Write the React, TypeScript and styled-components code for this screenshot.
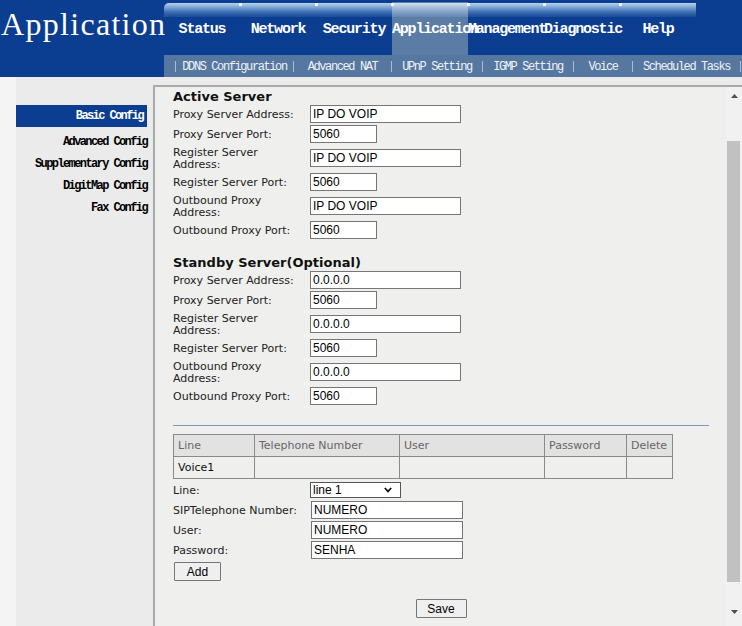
import React from 'react';
import styled, { createGlobalStyle } from 'styled-components';

const GlobalStyle = createGlobalStyle`
  html, body {
    margin: 0;
    padding: 0;
  }
  body {
    width: 742px;
    height: 626px;
    overflow: hidden;
    background: #f4f4f4;
  }
`;

const Header = styled.div`
  display: flex;
  height: 77px;
  background: #0b3d91;
`;

const Logo = styled.div`
  width: 164px;
  flex: none;
  padding: 4px 0 0 1px;
  box-sizing: border-box;
  font-family: 'Liberation Serif', serif;
  font-size: 32px;
  letter-spacing: 1.3px;
  line-height: 40px;
  color: #fff;
  white-space: nowrap;
`;

const NavArea = styled.div`
  flex: 1;
  display: flex;
  flex-direction: column;
  min-width: 0;
`;

const Tabs = styled.div`
  display: flex;
  height: 55px;
`;

const Tab = styled.div<{ $active?: boolean }>`
  width: 76px;
  flex: none;
  padding-top: 3px;
  box-sizing: border-box;
  background: ${(p) =>
    p.$active ? 'linear-gradient(to bottom, transparent 2px, #5b7da5 2px)' : 'transparent'};
`;

const TabStrip = styled.div<{ $first?: boolean; $active?: boolean }>`
  position: relative;
  height: 14px;
  border-top-left-radius: ${(p) => (p.$first ? '5px' : '0')};
  background: ${(p) =>
    p.$active
      ? 'linear-gradient(to bottom, #d2e0ee 0%, #a9c2dc 30%, #7c9dc2 70%, #6489b3 100%)'
      : 'linear-gradient(to bottom, #b9d1ec 0%, #7fa7d6 30%, #3566ad 70%, #1c4d99 100%)'};

  &::before {
    content: '';
    position: absolute;
    left: -1px;
    top: 0;
    width: 3px;
    height: 3px;
    background: ${(p) => (p.$first ? 'transparent' : '#ffffff')};
    opacity: 0.85;
  }
`;

const TabLabel = styled.div`
  display: flex;
  justify-content: safe center;
  margin-top: 3px;
  height: 20px;
  line-height: 20px;
  font-family: 'Liberation Mono', monospace;
  font-weight: bold;
  font-size: 15px;
  letter-spacing: -1.2px;
  color: #fff;
  white-space: nowrap;
`;

const SubNav = styled.div`
  display: flex;
  align-items: center;
  height: 22px;
  padding-left: 11px;
  background: #56779f;
  overflow: hidden;
`;

const SubItem = styled.div<{ $w: number }>`
  display: flex;
  align-items: center;
  width: ${(p) => p.$w}px;
  flex: none;
`;

const Sep = styled.span`
  width: 1px;
  height: 11px;
  flex: none;
  background: #a9bcd2;
`;

const SubLabel = styled.span`
  flex: 1;
  text-align: center;
  padding-top: 1px;
  font-family: 'Liberation Mono', monospace;
  font-size: 12px;
  letter-spacing: -1.4px;
  color: #eef3f8;
  white-space: nowrap;
`;

const Body = styled.div`
  display: flex;
  height: 549px;
`;

const Gutter = styled.div`
  width: 16px;
  flex: none;
  background: #f4f4f4;
`;

const Sidebar = styled.div`
  width: 137px;
  flex: none;
  padding-top: 28px;
  box-sizing: border-box;
  background: #ebebeb;
`;

const SideItem = styled.div<{ $active?: boolean }>`
  height: 22px;
  line-height: 22px;
  margin: 0 6px ${(p) => (p.$active ? '4px' : '0')} 0;
  padding-right: ${(p) => (p.$active ? '4px' : '0')};
  text-align: right;
  font-family: 'Liberation Mono', monospace;
  font-weight: bold;
  font-size: 12px;
  letter-spacing: -1.6px;
  white-space: nowrap;
  color: ${(p) => (p.$active ? '#fff' : '#000')};
  background: ${(p) => (p.$active ? '#0b3d91' : 'transparent')};
`;

const Main = styled.div`
  flex: 1;
  padding-top: 8px;
  background: #ebebeb;
  min-width: 0;
`;

const Panel = styled.div`
  display: flex;
  height: 541px;
  box-sizing: border-box;
  border-top: 2px solid #a9a9a9;
  border-left: 2px solid #a9a9a9;
  background: #eff0ee;
  overflow: hidden;
`;

const Content = styled.div`
  flex: 1;
  min-width: 0;
  padding: 2px 18px 0 18px;
  font-family: 'DejaVu Sans', Verdana, sans-serif;
  font-size: 11px;
  color: #222;
`;

const Heading = styled.div<{ $gap?: number }>`
  margin-top: ${(p) => p.$gap ?? 0}px;
  font-family: 'DejaVu Sans', Verdana, sans-serif;
  font-weight: bold;
  font-size: 13px;
  line-height: 15px;
  color: #111;
`;

const Row = styled.div<{ $tall?: boolean; $col?: number }>`
  display: grid;
  grid-template-columns: ${(p) => p.$col ?? 137}px 1fr;
  align-items: center;
  height: ${(p) => (p.$tall ? 28 : 20)}px;
`;

const Label = styled.div`
  line-height: 12px;
  max-width: 130px;
  padding-top: 1px;
`;

const TextInput = styled.input<{ $w: number }>`
  display: block;
  width: ${(p) => p.$w}px;
  height: 18px;
  box-sizing: border-box;
  margin: 0;
  padding: 0 2px;
  border: 1px solid #767676;
  border-radius: 0;
  background: #fff;
  font-family: 'Liberation Sans', Arial, sans-serif;
  font-size: 12px;
  color: #000;
  outline: none;
`;

const SelectBox = styled.div`
  display: flex;
  align-items: center;
  width: 91px;
  height: 16px;
  box-sizing: border-box;
  border: 1px solid #555;
  background: #fff;
`;

const Select = styled.select`
  flex: 1;
  min-width: 0;
  height: 14px;
  margin: 0;
  padding: 0 0 0 2px;
  border: none;
  background: transparent;
  appearance: none;
  font-family: 'Liberation Sans', Arial, sans-serif;
  font-size: 12px;
  line-height: 14px;
  color: #000;
  outline: none;
`;

const Chevron = styled.svg`
  width: 8px;
  height: 6px;
  margin-right: 8px;
  flex: none;
`;

const Divider = styled.div`
  margin-top: 19px;
  height: 1px;
  background: #7d99b6;
`;

const Table = styled.table`
  margin: 8px 0 1px;
  border-collapse: collapse;
  width: 499px;
  table-layout: fixed;
`;

const Th = styled.th<{ $w: number }>`
  width: ${(p) => p.$w - 9}px;
  height: 21px;
  padding: 0 4px;
  border: 1px solid #8a8a8a;
  background: #e2e2e2;
  text-align: left;
  font-weight: normal;
  font-size: 11px;
  color: #666;
`;

const Td = styled.td`
  height: 21px;
  padding: 0 4px;
  border: 1px solid #8a8a8a;
  font-size: 11px;
  color: #111;
`;

const Button = styled.button<{ $w: number }>`
  width: ${(p) => p.$w}px;
  height: 19px;
  margin: 0;
  padding: 0;
  box-sizing: border-box;
  border: 1px solid #767676;
  border-radius: 1px;
  background: #efefef;
  font-family: 'Liberation Sans', Arial, sans-serif;
  font-size: 12px;
  color: #000;
`;

const AddRow = styled.div`
  margin: 2px 0 0 1px;
`;

const SaveRow = styled.div`
  display: flex;
  justify-content: center;
  margin-top: 18px;
`;

const Scrollbar = styled.div`
  width: 15px;
  flex: none;
  display: flex;
  flex-direction: column;
  background: #f1f1f1;
  padding-bottom: 6px;
  box-sizing: border-box;
`;

const ScrollButton = styled.div`
  height: 17px;
  display: flex;
  align-items: center;
  justify-content: center;
  flex: none;
`;

const Track = styled.div`
  flex: 1;
`;

const Thumb = styled.div`
  width: 13px;
  height: 441px;
  margin-top: 37px;
  background: #c1c1c1;
`;

const tabs = ['Status', 'Network', 'Security', 'Application', 'Management', 'Diagnostic', 'Help'];

const subItems: [string, number][] = [
  ['DDNS Configuration', 118],
  ['Advanced NAT', 98],
  ['UPnP Setting', 91],
  ['IGMP Setting', 91],
  ['Voice', 59],
  ['Scheduled Tasks', 108],
];

const sideItems = ['Basic Config', 'Advanced Config', 'Supplementary Config', 'DigitMap Config', 'Fax Config'];

type Field = { label: string; value: string; w: number; tall?: boolean };

const serverFields = (addr: string): Field[] => [
  { label: 'Proxy Server Address:', value: addr, w: 151 },
  { label: 'Proxy Server Port:', value: '5060', w: 67 },
  { label: 'Register Server Address:', value: addr, w: 151, tall: true },
  { label: 'Register Server Port:', value: '5060', w: 67 },
  { label: 'Outbound Proxy Address:', value: addr, w: 151, tall: true },
  { label: 'Outbound Proxy Port:', value: '5060', w: 67 },
];

function FieldRows({ fields }: { fields: Field[] }) {
  return (
    <>
      {fields.map((f) => (
        <Row key={f.label} $tall={f.tall}>
          <Label>{f.label}</Label>
          <div>
            <TextInput $w={f.w} defaultValue={f.value} />
          </div>
        </Row>
      ))}
    </>
  );
}

function Arrow({ up }: { up?: boolean }) {
  return (
    <svg width="7" height="4" viewBox="0 0 7 4">
      <path d={up ? 'M0 4 L3.5 0 L7 4 Z' : 'M0 0 L3.5 4 L7 0 Z'} fill="#505050" />
    </svg>
  );
}

export default function App() {
  return (
    <>
      <GlobalStyle />
      <Header>
        <Logo>Application</Logo>
        <NavArea>
          <Tabs>
            {tabs.map((t, i) => (
              <Tab key={t} $active={t === 'Application'}>
                <TabStrip $first={i === 0} $active={t === 'Application'} />
                <TabLabel>{t}</TabLabel>
              </Tab>
            ))}
          </Tabs>
          <SubNav>
            {subItems.map(([label, w]) => (
              <SubItem key={label} $w={w}>
                <Sep />
                <SubLabel>{label}</SubLabel>
              </SubItem>
            ))}
            <Sep />
          </SubNav>
        </NavArea>
      </Header>
      <Body>
        <Gutter />
        <Sidebar>
          {sideItems.map((s, i) => (
            <SideItem key={s} $active={i === 0}>
              {s}
            </SideItem>
          ))}
        </Sidebar>
        <Main>
          <Panel>
            <Content>
              <Heading>Active Server</Heading>
              <FieldRows fields={serverFields('IP DO VOIP')} />
              <Heading $gap={15}>Standby Server(Optional)</Heading>
              <FieldRows fields={serverFields('0.0.0.0')} />
              <Divider />
              <Table>
                <thead>
                  <tr>
                    <Th $w={81}>Line</Th>
                    <Th $w={145}>Telephone Number</Th>
                    <Th $w={145}>User</Th>
                    <Th $w={82}>Password</Th>
                    <Th $w={46}>Delete</Th>
                  </tr>
                </thead>
                <tbody>
                  <tr>
                    <Td>Voice1</Td>
                    <Td />
                    <Td />
                    <Td />
                    <Td />
                  </tr>
                </tbody>
              </Table>
              <Row $col={137}>
                <Label>Line:</Label>
                <SelectBox>
                  <Select defaultValue="line 1">
                    <option>line 1</option>
                  </Select>
                  <Chevron viewBox="0 0 8 6">
                    <path d="M0.8 1 L4 4.4 L7.2 1" fill="none" stroke="#111" strokeWidth="1.8" />
                  </Chevron>
                </SelectBox>
              </Row>
              <Row $col={138}>
                <Label>SIPTelephone Number:</Label>
                <div>
                  <TextInput $w={152} defaultValue="NUMERO" />
                </div>
              </Row>
              <Row $col={138}>
                <Label>User:</Label>
                <div>
                  <TextInput $w={152} defaultValue="NUMERO" />
                </div>
              </Row>
              <Row $col={138}>
                <Label>Password:</Label>
                <div>
                  <TextInput $w={152} defaultValue="SENHA" />
                </div>
              </Row>
              <AddRow>
                <Button $w={47}>Add</Button>
              </AddRow>
              <SaveRow>
                <Button $w={51}>Save</Button>
              </SaveRow>
            </Content>
            <Scrollbar>
              <ScrollButton>
                <Arrow up />
              </ScrollButton>
              <Track>
                <Thumb />
              </Track>
              <ScrollButton>
                <Arrow />
              </ScrollButton>
            </Scrollbar>
          </Panel>
        </Main>
      </Body>
    </>
  );
}
